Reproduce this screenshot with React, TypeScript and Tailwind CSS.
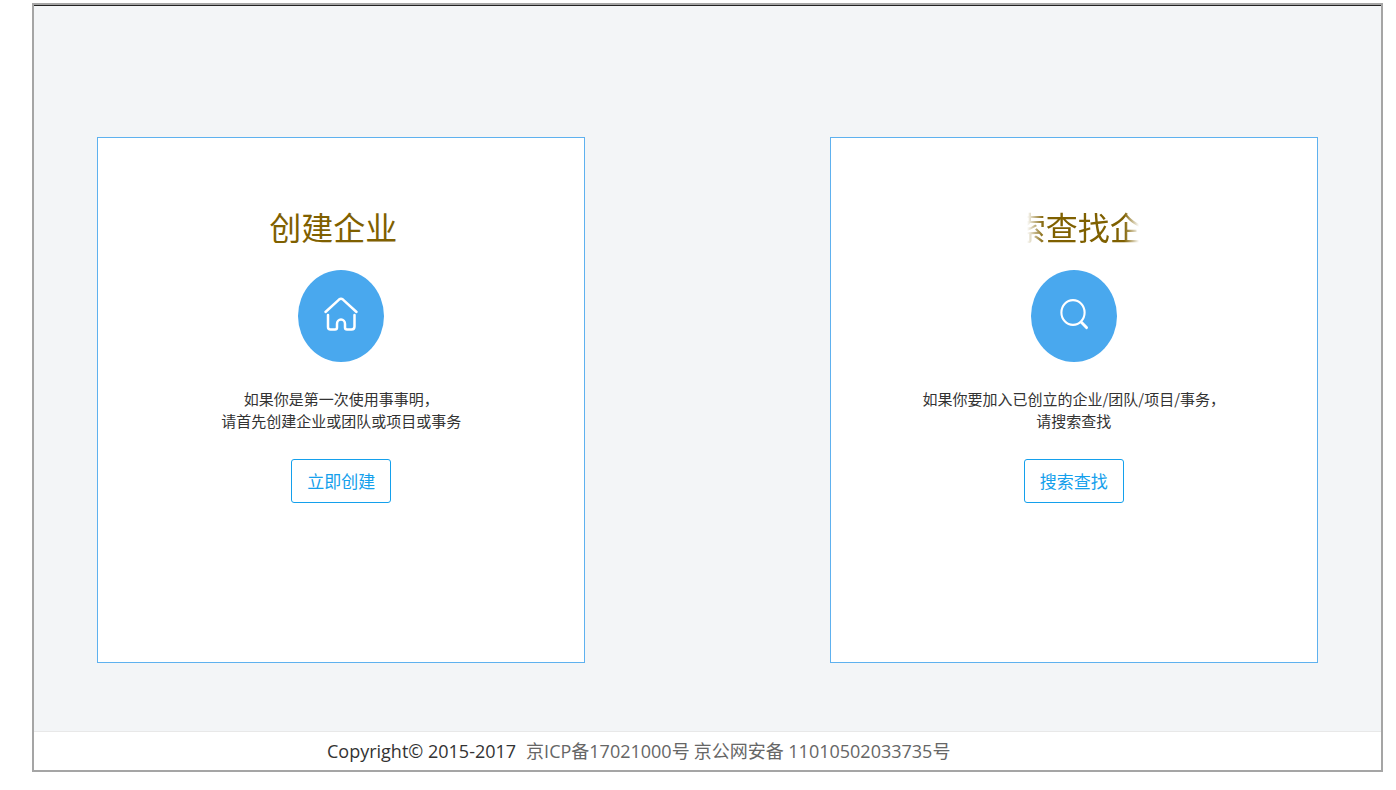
import { ReactNode } from 'react'

interface EntryCardProps {
  title: string
  icon: ReactNode
  lines: string[]
  action: string
  scrolling?: boolean
}

function HomeIcon() {
  return (
    <svg width="36" height="38" viewBox="0 0 36 38" fill="none" stroke="white" strokeWidth="2.5" strokeLinecap="round" strokeLinejoin="round" aria-hidden="true">
      <path d="M2.5 17 16 4.6Q18 3 20 4.6L33.5 17" />
      <path d="M5 20V32Q5 34.5 7.5 34.5H12Q14 34.5 14 32.5V29A4 4.5 0 0 1 22 29V32.5Q22 34.5 24 34.5H28.5Q31.5 34.5 31.5 31.5V20" />
    </svg>
  )
}

function SearchIcon() {
  return (
    <svg width="36" height="38" viewBox="0 0 36 38" fill="none" stroke="white" strokeLinecap="round" aria-hidden="true">
      <ellipse cx="17" cy="17.5" rx="11.6" ry="12.4" strokeWidth="2.1" />
      <path d="M25.6 27.6 30.5 32.6" strokeWidth="2.9" />
    </svg>
  )
}

function EntryCard({ title, icon, lines, action, scrolling }: EntryCardProps) {
  return (
    <section className="flex w-2/5 flex-col items-center border border-[#5eb1ef] bg-white pt-16 pb-[159px]">
      <h2
        className={
          scrolling
            ? 'ml-2 text-[32px] leading-[48px] whitespace-nowrap text-[#7f6000] [mask-image:linear-gradient(to_right,transparent_13px,black_30px,black_110px,transparent_125px)]'
            : 'mr-4 text-[32px] leading-[48px] text-[#7f6000]'
        }
      >
        {title}
      </h2>
      <div className="mt-5 flex h-[92px] w-[86px] items-center justify-center rounded-[50%] bg-[#49a8ee] pb-1">
        {icon}
      </div>
      <p className="mt-[26px] text-center text-[15px] leading-[22px] text-[#333333]">
        {lines.map((line) => (
          <span key={line} className="block">{line}</span>
        ))}
      </p>
      <button type="button" className="mt-[27px] h-11 w-[100px] rounded-[3px] border border-[#14a0ec] text-[17px] text-[#14a0ec]">
        {action}
      </button>
    </section>
  )
}

export default function App() {
  return (
    <div className="min-h-screen bg-white pt-[3px] pr-[13px] pb-[18px] pl-8 font-['Noto_Sans_CJK_SC',sans-serif]">
      <div className="border-2 border-[#a5a5a5]">
        <main className="flex justify-between border-t border-[#222222] bg-[#f3f5f7] px-[63px] pt-[131px] pb-[68px]">
          <EntryCard
            title="创建企业"
            icon={<HomeIcon />}
            lines={['如果你是第一次使用事事明，', '请首先创建企业或团队或项目或事务']}
            action="立即创建"
          />
          <EntryCard
            title="索查找企"
            icon={<SearchIcon />}
            lines={['如果你要加入已创立的企业/团队/项目/事务，', '请搜索查找']}
            action="搜索查找"
            scrolling
          />
        </main>
        <footer className="flex border-t border-[#e8e8e8] pl-[293px] font-['Open_Sans','Noto_Sans_CJK_SC',sans-serif] text-lg leading-[38px] text-[#333333]">
          <span>Copyright© 2015-2017</span>
          <a href="#icp" className="ml-[10px] text-[#666666]">京ICP备17021000号</a>
          <a href="#police" className="ml-1 text-[#666666]">京公网安备 11010502033735号</a>
        </footer>
      </div>
    </div>
  )
}
